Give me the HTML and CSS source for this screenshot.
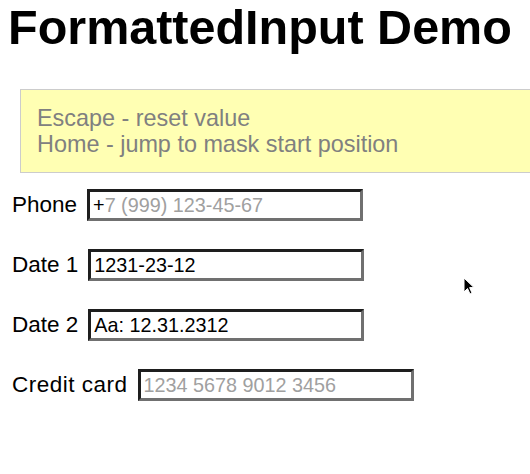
FILE: index.html
```html
<!DOCTYPE html>
<html>
<head>
<meta charset="utf-8">
<link rel="stylesheet" href="styles.css">
</head>
<body>
<h1 class="title">FormattedInput Demo</h1>
<div class="hint">
  <div>Escape - reset value</div>
  <div>Home - jump to mask start position</div>
</div>
<div class="rows">
  <div class="row"><span class="label">Phone</span><div class="field"><span class="typed">+</span><span class="mask">7 (999) 123-45-67</span></div></div>
  <div class="row"><span class="label">Date 1</span><div class="field"><span class="typed">1231-23-12</span></div></div>
  <div class="row"><span class="label">Date 2</span><div class="field"><span class="typed">Aa: 12.31.2312</span></div></div>
  <div class="row"><span class="label label-wide">Credit card</span><div class="field"><span class="mask">1234 5678 9012 3456</span></div></div>
</div>
<svg class="cursor" width="14" height="20" viewBox="0 0 14 20"><path d="M1 1 L1 15 L4.5 11.5 L7 17 L9 16 L6.6 10.6 L11 10.6 Z" fill="#000" stroke="#fff" stroke-width="1"/></svg>
</body>
</html>
```
FILE: styles.css
```css
html { overflow: hidden; }
body {
  margin: 0;
  padding: 0 8px;
  font-family: "Liberation Sans", Arial, sans-serif;
  position: relative;
  height: 474px;
}
.title {
  margin: 0;
  font-size: 48.5px;
  font-weight: bold;
  line-height: 55px;
  color: #000;
}
.hint {
  margin: 34px 0 0 12px;
  width: 100%;
  background: #ffffb3;
  border: 1px solid #cccccc;
  padding: 15px 16px;
  font-size: 23.4px;
  line-height: 26px;
  color: #808080;
}
.rows {
  margin-top: 16px;
  padding-left: 4px;
  display: flex;
  flex-direction: column;
  gap: 28px;
}
.row {
  display: flex;
  align-items: baseline;
  gap: 10px;
}
.label {
  font-size: 22.5px;
  color: #000;
}
.label-wide {
  letter-spacing: 0.5px;
}
.field {
  box-sizing: border-box;
  width: 276px;
  height: 32px;
  border-style: solid;
  border-width: 3px;
  border-color: #1e1e1e #707070 #707070 #1e1e1e;
  padding: 0 3px;
  font-size: 19.8px;
  line-height: 26px;
  background: #fff;
  white-space: pre;
}
.typed { color: #000; }
.mask { color: #a0a0a0; }
.cursor {
  position: absolute;
  left: 463px;
  top: 277px;
}
```
